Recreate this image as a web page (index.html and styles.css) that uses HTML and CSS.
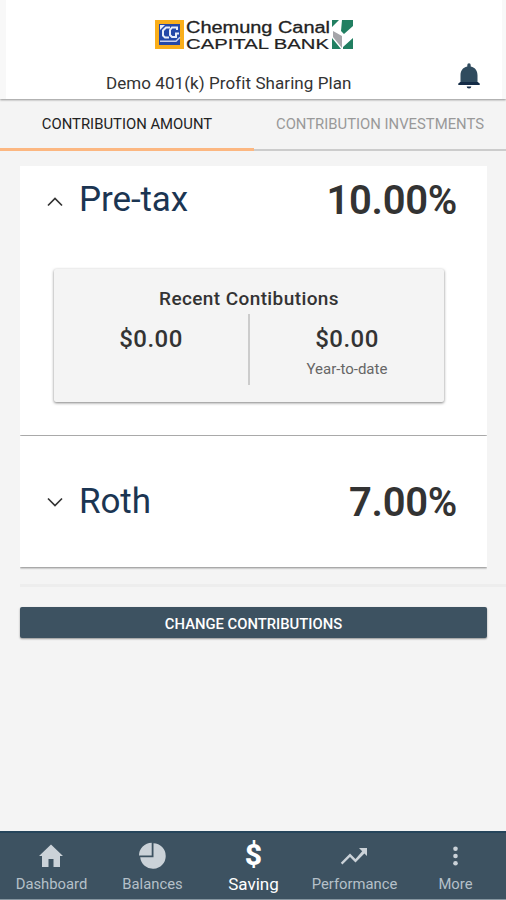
FILE: index.html
```html
<!DOCTYPE html>
<html lang="en">
<head>
    <meta charset="UTF-8">
    <meta name="viewport" content="width=device-width, initial-scale=1.0">
    <title>Demo 401(k) Profit Sharing Plan</title>
    <link rel="stylesheet" href="styles.css">
</head>
<body>
    <header class="header">
        <svg class="logo" viewBox="0 0 200 32">
            <rect x="1" y="1" width="29" height="29" fill="#f9ae1b"/>
            <rect x="5" y="5" width="21" height="21" fill="#2448a8"/>
            <path d="M6 6h5l-5 5z" fill="#e8edf8"/>
            <path d="M16 8.500h-4l-3 3v5l2 2h4M23 11v-2.500h-5l-2 2.500v5l2 2h4v-3.500h3" fill="none" stroke="#e8edf8" stroke-width="2"/>
            <path d="M6 22.300h16l4-4" fill="none" stroke="#c6d0ee" stroke-width="1.500"/>
            <text class="logo-name" x="32" y="13.500" textLength="144" lengthAdjust="spacingAndGlyphs">Chemung Canal</text>
            <text class="logo-sub" x="32" y="30" textLength="143" lengthAdjust="spacingAndGlyphs">CAPITAL BANK</text>
            <path d="M178 1h7l-7 7zM188 1h11v6l-9 8-3-3zM178 19l9 11h-9zM199 19v11h-10v-2z" fill="#217f61"/>
            <path d="M179 12l9 5v12l-9-11z" fill="#a5a5a9"/>
        </svg>
        <div class="plan-row">
            <span class="plan-name">Demo 401(k) Profit Sharing Plan</span>
            <svg class="bell" viewBox="0 0 22 26">
                <path d="M9.300 3.500V2a1.700 1.700 0 0 1 3.400 0v1.500c4.800 1 6.800 4.500 6.800 9V19l2 1.500V22H.5v-1.500l2-1.500v-6.500c0-4.500 2-8 6.800-9z" fill="#2f4b5e"/>
                <path d="M2.500 19h17l2 1.500V22H.5v-1.500z" fill="#142b46"/>
                <path d="M8.700 23.500h4.600a2.300 2 0 0 1-4.600 0z" fill="#142b46"/>
            </svg>
        </div>
    </header>

    <nav class="tabs">
        <a class="tab active">CONTRIBUTION AMOUNT</a>
        <a class="tab">CONTRIBUTION INVESTMENTS</a>
    </nav>

    <main class="content">
        <section class="card pretax">
            <div class="card-head">
                <svg class="chevron up" viewBox="0 0 16 10"><path d="M1 8.500l7-7 7 7"/></svg>
                <h2 class="source">Pre-tax</h2>
                <span class="percent">10.00%</span>
            </div>
            <div class="recent">
                <h3 class="recent-title">Recent Contibutions</h3>
                <div class="amounts">
                    <div class="amount"><b>$0.00</b></div>
                    <div class="amount"><b>$0.00</b><small>Year-to-date</small></div>
                </div>
            </div>
        </section>

        <section class="card roth">
            <div class="card-head">
                <svg class="chevron" viewBox="0 0 16 10"><path d="M1 1.500l7 7 7-7"/></svg>
                <h2 class="source">Roth</h2>
                <span class="percent">7.00%</span>
            </div>
        </section>
    </main>

    <div class="divider"></div>
    <button class="change">CHANGE CONTRIBUTIONS</button>

    <nav class="bottom-nav">
        <a class="nav-item">
            <svg class="nav-icon" viewBox="0 0 28 28"><path d="M14 2.500L2 14h3v11h6.500v-8h5v8H23V14h3z"/></svg>
            <span>Dashboard</span>
        </a>
        <a class="nav-item">
            <svg class="nav-icon" viewBox="0 0 28 28"><path d="M13.700.7v12.800H1A12.800 12.800 0 0 1 13.700.7zM15.500 1.200A12.800 12.800 0 1 1 2.200 15.300h13.300z"/></svg>
            <span>Balances</span>
        </a>
        <a class="nav-item active">
            <span class="dollar">$</span>
            <span>Saving</span>
        </a>
        <a class="nav-item">
            <svg class="nav-icon" viewBox="0 0 28 28"><path d="M19 6h8v8l-2.600-2.600-8.900 9.100-5.500-5.500-7.600 7.500L.8 20.800 10 11.500l5.500 5.500 6.700-7.700z"/></svg>
            <span>Performance</span>
        </a>
        <a class="nav-item">
            <svg class="nav-icon" viewBox="0 0 28 28"><circle cx="14.500" cy="6.800" r="2.300"/><circle cx="14.500" cy="14" r="2.300"/><circle cx="14.500" cy="21.200" r="2.300"/></svg>
            <span>More</span>
        </a>
    </nav>
</body>
</html>
```
FILE: styles.css
```css
* {
    box-sizing: border-box;
}

body {
    margin: 0;
    height: 900px;
    display: flex;
    flex-direction: column;
    overflow: hidden;
    font-family: Roboto, 'Liberation Sans', sans-serif;
    background: #f4f4f4;
    color: #333;
}

/* Header */
.header {
    flex: none;
    height: 99px;
    padding-top: 19px;
    background: linear-gradient(to right, #f8f8f8 6px, #fff 6px, #fff 502px, #f8f8f8 502px);
    box-shadow: 0 1px 2px rgba(0, 0, 0, 0.4);
}

.logo {
    display: block;
    width: 200px;
    height: 32px;
    margin-left: 154px;
}

.logo-name,
.logo-sub {
    font-family: 'Liberation Sans', sans-serif;
    font-size: 16px;
    fill: #222;
    stroke: #222;
    stroke-width: 0.3;
}

.logo-sub {
    font-size: 15px;
    stroke-width: 0.2;
}

.plan-row {
    display: flex;
    align-items: center;
    justify-content: space-between;
    height: 26px;
    margin: 12px 26px 0 106px;
}

.plan-name {
    font-size: 17px;
    letter-spacing: 0.07px;
    padding-top: 15px;
    margin-top: -1px;
}

.bell {
    width: 22px;
    height: 26px;
}

/* Tabs */
.tabs {
    flex: none;
    display: grid;
    grid-template-columns: 254px 252px;
    height: 52px;
}

.tab {
    padding-top: 17px;
    font-size: 14.85px;
    line-height: 17px;
    text-align: center;
    color: #999;
    border-bottom: 2px solid #ccc;
}

.tab.active {
    color: #222;
    border-bottom: 3px solid #fcb781;
}

/* Contribution cards */
.content {
    padding: 15px 19px 0 20px;
}

.card {
    background: #fff;
    box-shadow: 0 1px 2px rgba(0, 0, 0, 0.45);
    clip-path: inset(0 0 -3px 0);
}

.pretax {
    height: 269px;
    padding-top: 10px;
}

.roth {
    height: 131px;
    margin-top: 1px;
    padding-top: 42px;
}

.card-head {
    display: flex;
    align-items: center;
    height: 47px;
    padding: 0 30px 0 27px;
}

.chevron {
    width: 16px;
    height: 10px;
    fill: none;
    stroke: #333;
    stroke-width: 1.7;
}

.chevron.up {
    margin-top: 5px;
}

.source {
    margin: 0 0 0 16px;
    font-size: 35px;
    font-weight: 400;
    letter-spacing: -0.1px;
    color: #1b3552;
}

.percent {
    margin-left: auto;
    padding-top: 2px;
    font-size: 40px;
    font-weight: 600;
    letter-spacing: -0.3px;
}

.recent {
    height: 133px;
    margin: 46px 43px 0 34px;
    padding-top: 19px;
    background: #f4f4f4;
    border-radius: 2px;
    box-shadow: 0 1px 3px rgba(0, 0, 0, 0.5);
}

.recent-title {
    margin: 0;
    font-size: 19px;
    font-weight: 500;
    line-height: 22px;
    letter-spacing: 0.4px;
    text-align: center;
}

.amounts {
    display: grid;
    grid-template-columns: 194px 1fr;
    height: 71px;
    margin-top: 4px;
}

.amount {
    padding-top: 10px;
    text-align: center;
}

.amount + .amount {
    border-left: 2px solid #ccc;
}

.amount b {
    display: block;
    font-size: 24px;
    font-weight: 500;
    line-height: 30px;
    letter-spacing: 0.5px;
}

.amount small {
    display: block;
    margin-top: 6px;
    font-size: 15px;
    line-height: 18px;
    color: #666;
}

.divider {
    flex: none;
    height: 3px;
    margin: 17px 0 0 20px;
    background: #ededed;
}

.change {
    flex: none;
    height: 31px;
    margin: 20px 19px 0 20px;
    padding: 2px 0 0;
    border: none;
    border-radius: 2px;
    background: #3d5261;
    color: #fff;
    font-family: inherit;
    font-size: 14.8px;
    font-weight: 500;
    box-shadow: 0 1px 2px rgba(0, 0, 0, 0.4);
}

/* Bottom navigation */
.bottom-nav {
    display: grid;
    grid-template-columns: repeat(5, 1fr);
    height: 69px;
    margin-top: auto;
    padding-left: 1px;
    background: #3d5261;
    border-top: 2px solid #26455b;
    border-bottom: 1px solid #8696a0;
}

.nav-item {
    display: flex;
    flex-direction: column;
    align-items: center;
    padding-top: 9px;
    font-size: 14.8px;
    line-height: 18px;
    color: #b5c0c9;
}

.nav-icon {
    width: 28px;
    height: 28px;
    margin: 0 1px 5px 0;
    fill: #cbd2d8;
}

.nav-item.active {
    color: #fff;
    font-size: 17px;
}

.dollar {
    height: 28px;
    margin-bottom: 5px;
    font-size: 30px;
    font-weight: 800;
    line-height: 26px;
}
```
